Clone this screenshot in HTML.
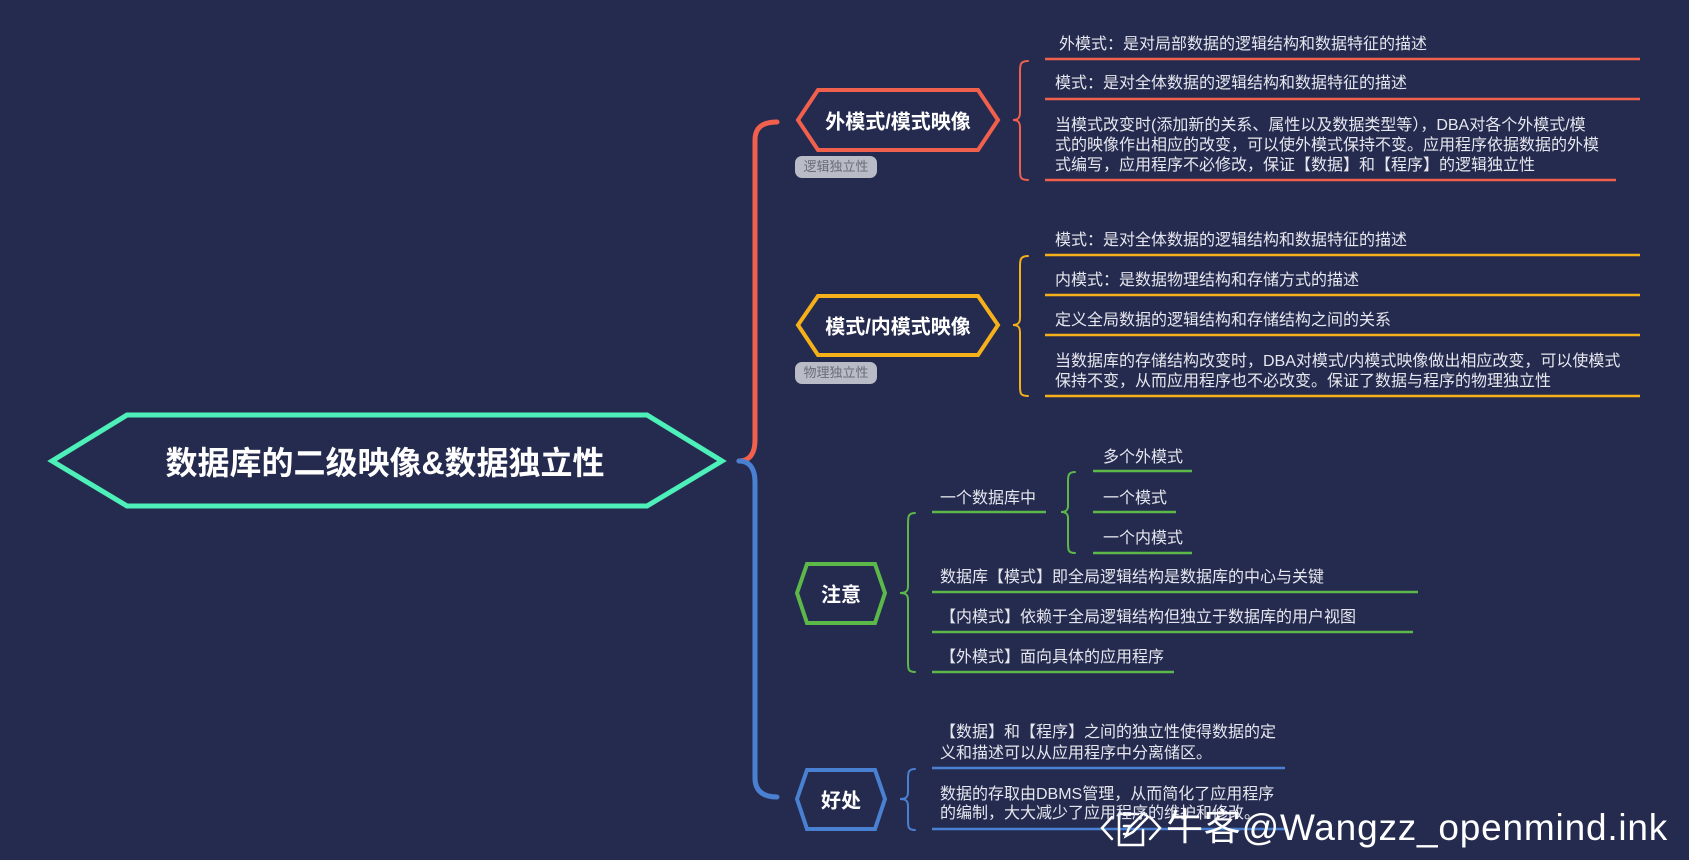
<!DOCTYPE html>
<html><head><meta charset="utf-8"><style>
html,body{margin:0;padding:0}
body{width:1689px;height:860px;background:#252b4f;position:relative;overflow:hidden;font-family:"Liberation Sans","Noto Sans CJK SC",sans-serif}
.t{position:absolute;color:#e6e7ee;font-size:16px;line-height:20px;white-space:nowrap;margin-top:2px}
.b{position:absolute;color:#fff;font-weight:bold;white-space:nowrap;transform:translate(-50%,-50%)}
.tag{position:absolute;background:#b9bbc6;color:#6a6c78;font-size:13px;border-radius:7px;text-align:center;line-height:22px}
svg{position:absolute;left:0;top:0}
</style></head><body>
<svg width="1689" height="860" fill="none" stroke-linecap="round" stroke-linejoin="miter">
<polygon points="52,461 127,415 647,415 722,461 647,506 127,506" stroke="#4df0b8" stroke-width="5"/>
<path d="M739,461 C752,461 755,450 755,440 L755,140 C755,128 762,122 777,122" stroke="#f0604c" stroke-width="5"/>
<path d="M739,461 C752,461 755,472 755,482 L755,778 C755,790 762,797 777,797" stroke="#4a80d2" stroke-width="5"/>
<polygon points="798,120 818,90 978,90 998,120 978,150 818,150" stroke="#f0604c" stroke-width="4" fill="#252b4f"/>
<polygon points="798,325 818,296 978,296 998,325 978,355 818,355" stroke="#f5b01a" stroke-width="4" fill="#252b4f"/>
<polygon points="797,593 807,564 875,564 885,593 875,623 807,623" stroke="#5cb848" stroke-width="4" fill="#252b4f"/>
<polygon points="797,799 807,770 875,770 885,799 875,829 807,829" stroke="#4a80d2" stroke-width="4" fill="#252b4f"/>
<g stroke-width="2">
<path d="M1028,61 C1020,61 1020,65 1020,72 L1020,112 C1020,118 1018,120 1013,120 C1018,120 1020,122 1020,128 L1020,170 C1020,177 1020,180 1028,180" stroke="#f0604c"/>
<path d="M1028,256 C1020,256 1020,260 1020,267 L1020,318 C1020,323 1018,325 1013,325 C1018,325 1020,327 1020,332 L1020,386 C1020,393 1020,396 1028,396" stroke="#f5b01a"/>
<path d="M915,513 C908,513 908,517 908,524 L908,586 C908,591 906,593 900,593 C906,593 908,595 908,600 L908,662 C908,669 908,672 915,672" stroke="#5cb848"/>
<path d="M1075,472 C1068,472 1068,476 1068,482 L1068,506 C1068,510 1066,512 1061,512 C1066,512 1068,514 1068,518 L1068,543 C1068,550 1068,553 1075,553" stroke="#5cb848"/>
<path d="M915,769 C908,769 908,773 908,779 L908,792 C908,797 906,799 900,799 C906,799 908,801 908,806 L908,820 C908,827 908,830 915,830" stroke="#4a80d2"/>
</g>
<g stroke-width="2.5" stroke-linecap="butt">
<line x1="1045" y1="59" x2="1640" y2="59" stroke="#f0604c"/>
<line x1="1045" y1="99" x2="1640" y2="99" stroke="#f0604c"/>
<line x1="1045" y1="180" x2="1616" y2="180" stroke="#f0604c"/>
<line x1="1045" y1="255" x2="1640" y2="255" stroke="#f5b01a"/>
<line x1="1045" y1="295" x2="1640" y2="295" stroke="#f5b01a"/>
<line x1="1045" y1="335" x2="1640" y2="335" stroke="#f5b01a"/>
<line x1="1045" y1="396" x2="1640" y2="396" stroke="#f5b01a"/>
<line x1="932" y1="512" x2="1046" y2="512" stroke="#5cb848"/>
<line x1="1093" y1="471" x2="1192" y2="471" stroke="#5cb848"/>
<line x1="1093" y1="512" x2="1176" y2="512" stroke="#5cb848"/>
<line x1="1093" y1="553" x2="1192" y2="553" stroke="#5cb848"/>
<line x1="932" y1="592" x2="1418" y2="592" stroke="#5cb848"/>
<line x1="932" y1="632" x2="1413" y2="632" stroke="#5cb848"/>
<line x1="932" y1="672" x2="1174" y2="672" stroke="#5cb848"/>
<line x1="932" y1="768" x2="1285" y2="768" stroke="#4a80d2"/>
<line x1="932" y1="829" x2="1285" y2="829" stroke="#4a80d2"/>
</g>
<g stroke="#fff" stroke-width="2.5">
<path d="M1112,817 L1102,828 L1112,839"/>
<path d="M1150,817 L1160,828 L1150,839"/>
<path d="M1119,814 L1138,814 M1119,814 L1119,845 L1143,845 L1143,830"/>
<path d="M1126,836 L1129,828 L1144,813 L1148,817 L1133,832 Z"/>
<path d="M1124,826 L1130,826 M1124,834 L1126,834"/>
</g>
</svg>

<div class="b" style="left:385px;top:461px;font-size:32px">数据库的二级映像&amp;数据独立性</div>
<div class="b" style="left:898px;top:120px;font-size:20px">外模式/模式映像</div>
<div class="b" style="left:898px;top:325px;font-size:20px">模式/内模式映像</div>
<div class="b" style="left:841px;top:593px;font-size:20px">注意</div>
<div class="b" style="left:841px;top:799px;font-size:20px">好处</div>

<div class="tag" style="left:795px;top:156px;width:82px;height:22px">逻辑独立性</div>
<div class="tag" style="left:795px;top:362px;width:82px;height:22px">物理独立性</div>

<div class="t" style="left:1059px;top:33px">外模式：是对局部数据的逻辑结构和数据特征的描述</div>
<div class="t" style="left:1055px;top:72px">模式：是对全体数据的逻辑结构和数据特征的描述</div>
<div class="t" style="left:1055px;top:114px">当模式改变时(添加新的关系、属性以及数据类型等），DBA对各个外模式/模</div>
<div class="t" style="left:1055px;top:134px">式的映像作出相应的改变，可以使外模式保持不变。应用程序依据数据的外模</div>
<div class="t" style="left:1055px;top:154px">式编写，应用程序不必修改，保证【数据】和【程序】的逻辑独立性</div>

<div class="t" style="left:1055px;top:229px">模式：是对全体数据的逻辑结构和数据特征的描述</div>
<div class="t" style="left:1055px;top:269px">内模式：是数据物理结构和存储方式的描述</div>
<div class="t" style="left:1055px;top:309px">定义全局数据的逻辑结构和存储结构之间的关系</div>
<div class="t" style="left:1055px;top:350px">当数据库的存储结构改变时，DBA对模式/内模式映像做出相应改变，可以使模式</div>
<div class="t" style="left:1055px;top:370px">保持不变，从而应用程序也不必改变。保证了数据与程序的物理独立性</div>

<div class="t" style="left:940px;top:487px">一个数据库中</div>
<div class="t" style="left:1103px;top:446px">多个外模式</div>
<div class="t" style="left:1103px;top:487px">一个模式</div>
<div class="t" style="left:1103px;top:527px">一个内模式</div>
<div class="t" style="left:940px;top:566px">数据库【模式】即全局逻辑结构是数据库的中心与关键</div>
<div class="t" style="left:940px;top:606px">【内模式】依赖于全局逻辑结构但独立于数据库的用户视图</div>
<div class="t" style="left:940px;top:646px">【外模式】面向具体的应用程序</div>

<div class="t" style="left:940px;top:721px">【数据】和【程序】之间的独立性使得数据的定</div>
<div class="t" style="left:940px;top:742px">义和描述可以从应用程序中分离储区。</div>
<div class="t" style="left:940px;top:783px">数据的存取由DBMS管理，从而简化了应用程序</div>
<div class="t" style="left:940px;top:802px">的编制，大大减少了应用程序的维护和修改。</div>

<div style="position:absolute;left:1166px;top:806px;color:#fff;font-size:37px;line-height:44px;white-space:nowrap;font-family:'Liberation Sans','Noto Sans CJK SC',sans-serif;letter-spacing:0.8px">牛客@Wangzz_openmind.ink</div>
</body></html>
